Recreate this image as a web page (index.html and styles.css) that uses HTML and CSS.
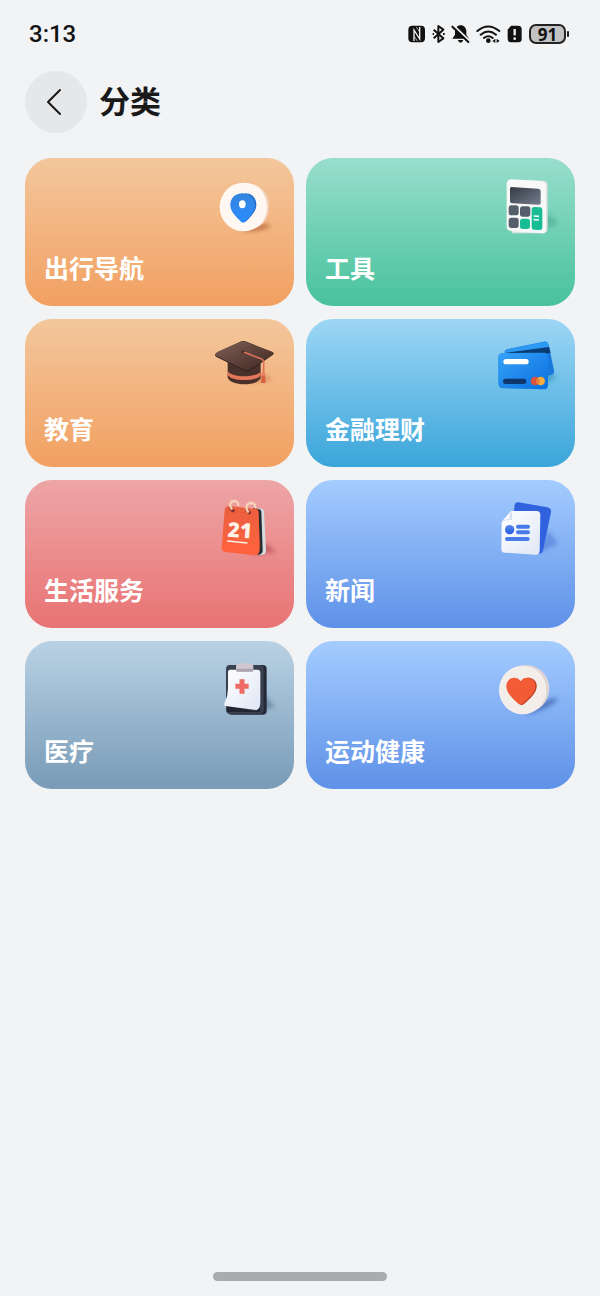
FILE: index.html
```html
<!DOCTYPE html>
<html lang="zh-CN">
<head>
<meta charset="utf-8">
<meta name="viewport" content="width=device-width, initial-scale=1">
<title>分类</title>
<link rel="stylesheet" href="styles.css">
</head>
<body>

<div class="status">
  <span class="time">3:13</span>
  <div class="status-icons">
    <!-- nfc, bluetooth, muted, wifi, sim -->
    <svg width="120" height="24" viewBox="0 0 360 72" aria-hidden="true">
      <rect x="4" y="11" width="50" height="50" rx="12" fill="#111"/>
      <path d="M21 57V24l17 27V15" fill="none" stroke="#f1f3f5" stroke-width="4"/>
      <path d="M28 15l9 14M22 43l9 14" stroke="#f1f3f5" stroke-width="2"/>
      <path d="M80 23l29 26-15 11V12l15 11-29 26" fill="none" stroke="#111" stroke-width="6" stroke-linejoin="round"/>
      <path d="M77 36h4M108 36h5" stroke="#111" stroke-width="6"/>
      <path d="M161 10c10 0 17 8 17 18v10l8 12h-50l8-12V28c0-10 7-18 17-18zM152 54h17q-3 8-8 8t-9-8z" fill="#111"/>
      <path d="M139 10l49 47" stroke="#f1f3f5" stroke-width="6"/>
      <path d="M136 14l48 46" stroke="#111" stroke-width="6" stroke-linecap="round"/>
      <path d="M211 27q32-27 66 0M221 38q23-19 46 0M231 48q13-10 26 0" fill="none" stroke="#111" stroke-width="6" stroke-linecap="round"/>
      <circle cx="244" cy="56" r="7" fill="#111"/>
      <path d="M265 50v13l-9-6zM269 50v13l9-6z" fill="#111"/>
      <path d="M312 11h20q12 0 12 10v30q0 10-10 10h-22q-10 0-10-10V23z" fill="#111"/>
      <path d="M323 21v19" stroke="#f1f3f5" stroke-width="7"/>
      <circle cx="323" cy="50" r="4" fill="#f1f3f5"/>
    </svg>
    <span class="battery">91</span>
  </div>
</div>

<header class="header">
  <button class="back" type="button" aria-label="返回">
    <svg width="62" height="62" viewBox="0 0 62 62" aria-hidden="true">
      <path d="M35 19L23 31l12 12" fill="none" stroke="#191919" stroke-width="2" stroke-linecap="round" stroke-linejoin="round"/>
    </svg>
  </button>
  <h1>分类</h1>
</header>

<svg class="defs" width="0" height="0" aria-hidden="true">
  <defs>
    <filter id="soft" x="-40%" y="-100%" width="180%" height="300%"><feGaussianBlur stdDeviation="7"/></filter>
    <linearGradient id="pin" x1="0" y1="0" x2="0" y2="1"><stop offset="0" stop-color="#3585dc"/><stop offset="1" stop-color="#2b8cff"/></linearGradient>
    <linearGradient id="disc" x1="0" y1="0" x2="1" y2="0"><stop offset="0.8" stop-color="#fae8dc"/><stop offset="1" stop-color="#f0cdb3"/></linearGradient>
    <linearGradient id="screen" x1="0" y1="0" x2="1" y2="1"><stop offset="0" stop-color="#343a45"/><stop offset="1" stop-color="#747d8c"/></linearGradient>
    <linearGradient id="cap" x1="0" y1="0" x2="1" y2="1"><stop offset="0" stop-color="#806257"/><stop offset="0.6" stop-color="#583d36"/><stop offset="1" stop-color="#402923"/></linearGradient>
    <linearGradient id="card" x1="0" y1="0" x2="1" y2="1"><stop offset="0" stop-color="#36a2f7"/><stop offset="1" stop-color="#0a6fe0"/></linearGradient>
    <linearGradient id="cal" x1="0" y1="0" x2="0" y2="1"><stop offset="0" stop-color="#ea5f3e"/><stop offset="1" stop-color="#ff633d"/></linearGradient>
    <linearGradient id="paper" x1="0" y1="0" x2="1" y2="1"><stop offset="0" stop-color="#fff"/><stop offset="1" stop-color="#dfe6f5"/></linearGradient>
    <linearGradient id="sheet" x1="0" y1="0" x2="0" y2="1"><stop offset="0" stop-color="#5789ee"/><stop offset="1" stop-color="#2459d8"/></linearGradient>
  </defs>
</svg>

<main class="grid">
  <a class="card orange" href="#">
    <svg class="icon" viewBox="0 0 240 225" aria-hidden="true">
      <ellipse cx="153" cy="173" rx="42" ry="9" fill="#a34b20" opacity=".6" filter="url(#soft)" transform="rotate(-8 153 173)"/>
      <ellipse cx="123" cy="110" rx="70" ry="71" fill="url(#disc)"/>
      <ellipse cx="115" cy="111" rx="71" ry="73" fill="#fff8f2"/>
      <path d="M120 70c21 0 34 15 34 34 0 21-18 37-31 50q-6 6-12 0z" fill="#1d68c8"/>
      <path d="M113 70c23 0 37 15 37 35 0 21-18 37-30 50q-6 5-12 0c-13-13-32-29-32-50 0-20 14-35 37-35z" fill="url(#pin)"/>
      <ellipse cx="112" cy="103" rx="10" ry="12" fill="#fff"/>
    </svg>
    <span class="label">出行导航</span>
  </a>
  <a class="card green" href="#">
    <svg class="icon" viewBox="-12 0 240 225" aria-hidden="true">
      <path d="M150 185l55-25-30-30z" fill="#268d70" opacity=".35" filter="url(#soft)"/>
      <path d="M66 29l95 3q12 1 12 14v129q0 14-12 15l-95 0z" fill="#dce1df"/>
      <path d="M63 28l90 5q15 1 15 16v127q0 14-14 14l-89-6q-15-2-15-16V42q0-14 13-14z" fill="#f7f8f7"/>
      <path d="M64 51l80 5q8 1 8 7v37q0 5-7 4l-79-4q-6 0-6-6V57q0-6 4-6z" fill="url(#screen)"/>
      <rect x="56" y="106" width="30" height="30" rx="8" fill="#555f6b"/>
      <rect x="90" y="109" width="31" height="31" rx="8" fill="#555f6b"/>
      <rect x="56" y="143" width="30" height="31" rx="8" fill="#555f6b"/>
      <rect x="90" y="146" width="30" height="31" rx="8" fill="#18bd96"/>
      <path d="M132 111l19 1q6 0 6 8v52q0 8-7 8l-18-1q-7 0-7-8v-52q0-8 7-8z" fill="#18bd96"/>
      <path d="M131 138l16 1M131 149l16 1" stroke="#e8fff8" stroke-width="5"/>
    </svg>
    <span class="label">工具</span>
  </a>
  <a class="card orange" href="#">
    <svg class="icon" viewBox="0 3 240 225" aria-hidden="true">
      <ellipse cx="150" cy="145" rx="48" ry="11" fill="#b36237" opacity=".45" filter="url(#soft)"/>
      <path d="M68 90v52c6 28 94 28 99 0V88z" fill="#49302a"/>
      <path d="M68 123c14 22 85 20 99 2v12c-14 17-86 19-99-2z" fill="#e2775c"/>
      <path d="M30 76q1-5 8-9l68-32q7-4 15-1l80 32q8 3 3 8l-68 48q-7 5-16 1L36 82q-6-3-6-6z" fill="#352420"/>
      <path d="M31 73q0-4 7-8l68-30q7-3 15 0l80 30q8 3 2 8l-68 45q-7 5-16 1L36 79q-5-3-5-6z" fill="url(#cap)"/>
      <ellipse cx="116" cy="66" rx="7" ry="4" fill="#3c2520"/>
      <path d="M118 67l52 20q6 2 6 9v38" fill="none" stroke="#dc7259" stroke-width="5" stroke-linecap="round"/>
      <path d="M171 130h8l3 29h-14z" fill="#d85f42"/>
      <circle cx="175" cy="131" r="6" fill="#ee856a"/>
    </svg>
    <span class="label">教育</span>
  </a>
  <a class="card cyan" href="#">
    <svg class="icon" viewBox="-12 3 240 225" aria-hidden="true">
      <path d="M145 175l55-32-30-28z" fill="#2887b5" opacity=".5" filter="url(#soft)"/>
      <path d="M54 57l107-22q12-2 15 10l16 76q2 12-9 14l-80 17-59-83q-2-9 10-12z" fill="#1679dd"/>
      <path d="M44 68q2-8 11-10l106-22q11-2 14 7l4 14-104 18z" fill="#2c99f3"/>
      <path d="M48 68l129-17 5 17-51 13z" fill="#0a3c75"/>
      <path d="M36 69l126-1q12 0 12 13v83q0 14-13 14l-121-3q-15-1-15-14l-1-79q0-12 12-13z" fill="url(#card)"/>
      <rect x="40" y="87" width="76" height="16" rx="8" fill="#fff"/>
      <rect x="39" y="146" width="70" height="16" rx="8" fill="#10366b"/>
      <circle cx="135" cy="153" r="13" fill="#dc553f"/>
      <circle cx="152" cy="153" r="13" fill="#f6ad3e"/>
      <path d="M144 143q9 10 0 20-8-10 0-20z" fill="#ed7639"/>
    </svg>
    <span class="label">金融理财</span>
  </a>
  <a class="card red" href="#">
    <svg class="icon" viewBox="0 6 240 225" aria-hidden="true">
      <path d="M135 195l78-8-33-30z" fill="#a43844" opacity=".5" filter="url(#soft)"/>
      <path d="M149 55l20 1q7 1 8 8l6 119q0 9-11 11l-12 1z" fill="#d5dce0"/>
      <path d="M145 54l18 4q5 1 6 7l4 116q0 13-15 14z" fill="#262b32"/>
      <path d="M144 54l15 3 7 112-10 20z" fill="#803a2e"/>
      <path d="M72 48l80 9q9 1 9 10l3 112q-1 18-18 17l-84-10q-13-2-12-14l9-111q1-13 13-13z" fill="url(#cal)"/>
      <path d="M77 55l7 7M126 61l7 7" stroke="#8d3028" stroke-width="10" stroke-linecap="round"/>
      <path d="M80 56c-9-10-4-23 8-23 8 0 12 6 12 12M129 65c-9-11-4-25 8-26 9 0 14 5 14 13" fill="none" stroke="#f7d2b6" stroke-width="7" stroke-linecap="round"/>
      <text class="day" x="67" y="140" transform="rotate(4 67 140)">21</text>
      <path d="M68 153l58 6" stroke="#fff1e8" stroke-width="4" stroke-linecap="round"/>
    </svg>
    <span class="label">生活服务</span>
  </a>
  <a class="card blue" href="#">
    <svg class="icon" viewBox="-12 6 240 225" aria-hidden="true">
      <path d="M145 190l60-30-32-40z" fill="#315fc2" opacity=".4" filter="url(#soft)"/>
      <path d="M85 37l87 15q13 3 11 15l-24 115q-3 11-14 8L70 78l4-33q1-9 11-8z" fill="#3062de"/>
      <path d="M63 63h77q11 0 11 12l-2 107q-1 13-13 12l-91-6q-12-1-11-13l1-78z" fill="url(#paper)"/>
      <path d="M34 97l29-34q6 6 2 27-13-2-31 7z" fill="#d4def1"/>
      <path d="M36 95l27-31q-5 8-5 22-11-1-22 9z" fill="#fff"/>
      <circle cx="59" cy="119" r="14" fill="url(#sheet)"/>
      <path d="M84 110h30M84 127h30M51 147h62" stroke="#477be8" stroke-width="12" stroke-linecap="round"/>
    </svg>
    <span class="label">新闻</span>
  </a>
  <a class="card slate" href="#">
    <svg class="icon" viewBox="0 9 240 225" aria-hidden="true">
      <path d="M150 190l60-20-32-36z" fill="#466a84" opacity=".5" filter="url(#soft)"/>
      <rect x="68" y="45" width="117" height="149" rx="12" fill="#242a37"/>
      <rect x="63" y="45" width="113" height="146" rx="12" fill="#394050"/>
      <path d="M66 167l90 17 10-20-1 22H66z" fill="#202632"/>
      <path d="M75 59h82q9 0 9 9v88q0 10-3 18l-8 6-94-12q-6-2-2-10 10-20 10-42V68q0-9 6-9z" fill="url(#paper)"/>
      <path d="M93 51q0-11 11-11h30q11 0 11 11v11q0 3-5 3h-42q-5 0-5-3z" fill="#cfc6ce"/>
      <path d="M94 56h50v6q0 3-5 3h-40q-5 0-5-3z" fill="#aaa5af"/>
      <path d="M111 88v43M91 109h40" stroke="#ef6b65" stroke-width="15"/>
    </svg>
    <span class="label">医疗</span>
  </a>
  <a class="card blue" href="#">
    <svg class="icon" viewBox="-12 9 240 225" aria-hidden="true">
      <ellipse cx="155" cy="168" rx="52" ry="11" fill="#294c9d" opacity=".55" filter="url(#soft)" transform="rotate(-24 155 168)"/>
      <ellipse cx="108" cy="116" rx="70" ry="71" fill="#dfd5d3"/>
      <ellipse cx="98" cy="120" rx="71" ry="73" fill="#f3eee9"/>
      <path d="M94 96c10-20 42-15 46 8 3 24-22 43-38 58q-7 6-14 0z" fill="#bd3b22"/>
      <path d="M92 94c11-17 40-13 44 10 3 24-22 42-37 56q-7 6-14 1c-15-13-37-33-36-54 2-24 30-32 43-13z" fill="#f15b36"/>
    </svg>
    <span class="label">运动健康</span>
  </a>
</main>

<div class="home-bar"></div>

</body>
</html>
```
FILE: styles.css
```css
* {
  box-sizing: border-box;
}

body {
  margin: 0;
  min-height: 100vh;
  display: flex;
  flex-direction: column;
  background: #f1f3f5;
  font-family: "Noto Sans CJK SC", sans-serif;
}

.status {
  display: flex;
  justify-content: space-between;
  align-items: center;
  height: 68px;
  padding: 0 34px 0 29px;
}

.time {
  font: 500 24px/24px Roboto, sans-serif;
  color: #111;
}

.status-icons {
  display: flex;
  align-items: center;
  gap: 2px;
}

.battery {
  position: relative;
  width: 37px;
  height: 20px;
  border: 2px solid #222;
  border-radius: 7px;
  background: #c1c2c3;
  color: #111;
  font: bold 17px/17px "Open Sans", sans-serif;
  text-align: center;
}

/* battery tip */
.battery::after {
  content: "";
  position: absolute;
  top: 5px;
  right: -5px;
  width: 2px;
  height: 6px;
  border-radius: 1px;
  background: #222;
}

.header {
  display: flex;
  align-items: center;
  gap: 12px;
  padding: 3px 25px 25px;
}

.back {
  width: 62px;
  height: 62px;
  padding: 0;
  border: none;
  border-radius: 50%;
  background: #e6e7e9;
}

.back svg {
  display: block;
}

h1 {
  margin: 0 0 4px;
  font-size: 31px;
  line-height: 40px;
  font-weight: bold;
  color: #191919;
}

.defs {
  position: absolute;
}

.grid {
  display: grid;
  grid-template-columns: 1fr 1fr;
  gap: 13px 12px;
  padding: 0 25px;
}

.card {
  display: flex;
  flex-direction: column;
  justify-content: space-between;
  height: 148px;
  padding: 12px 9px 21px 19px;
  border-radius: 27px;
  color: #fff;
  text-decoration: none;
}

.icon {
  align-self: flex-end;
  width: 80px;
  height: 75px;
}

.day {
  font: 800 62px "Open Sans", sans-serif;
  fill: #fff1e8;
}

.label {
  font-size: 25px;
  line-height: 36px;
  font-weight: bold;
}

.orange {
  background: linear-gradient(#f3c79c, #f2a061);
}

.green {
  background: linear-gradient(#98decc, #48c29c);
}

.cyan {
  background: linear-gradient(#9dd6f5, #3aa5da);
}

.red {
  background: linear-gradient(#eda5a6, #e97373);
}

.blue {
  background: linear-gradient(#a4ccff, #5e91e8);
}

.slate {
  background: linear-gradient(#b9d1e4, #789bb7);
}

.home-bar {
  width: 29%;
  height: 9px;
  margin: auto auto 15px;
  border-radius: 5px;
  background: #a9abac;
}
```
